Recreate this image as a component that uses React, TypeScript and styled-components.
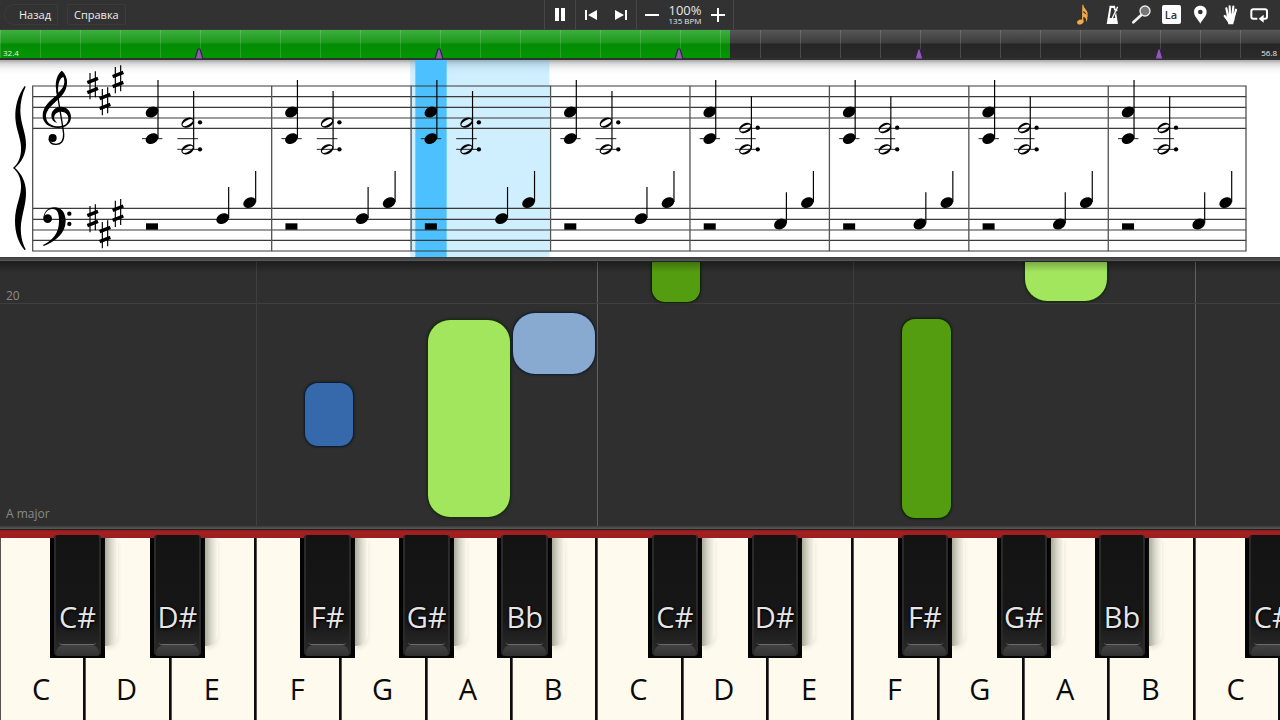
import React from 'react';
import styled, { createGlobalStyle } from 'styled-components';

const GlobalStyle = createGlobalStyle`
  *, *::before, *::after { box-sizing: border-box; }
  body {
    margin: 0;
    background: #2f2f2f;
    font-family: "Open Sans", "Noto Sans", sans-serif;
  }
  button { font-family: inherit; }
`;

const Page = styled.div`
  display: flex;
  flex-direction: column;
  min-height: 100vh;
  overflow: hidden;
`;

/* ---------- top bar ---------- */

const TopBar = styled.header`
  display: grid;
  grid-template-columns: 1fr auto 1fr;
  align-items: stretch;
  height: 29px;
  padding: 0 6px 0 4px;
  background: #323232;
`;

const NavGroup = styled.nav`
  display: flex;
  align-items: center;
  gap: 9px;
`;

const NavButton = styled.button<{ $back?: boolean }>`
  height: 21px;
  padding: ${(p) => (p.$back ? '0 6px 0 14px' : '0 6px')};
  border: 1px solid #3b3b3b;
  border-radius: ${(p) => (p.$back ? '10px 1px 1px 10px' : '1px')};
  background: transparent;
  color: #ececec;
  font-size: 11px;
  line-height: 18px;
`;

const Transport = styled.div`
  display: flex;
`;

const ControlGroup = styled.div`
  display: flex;
  align-items: center;
  border-left: 1px solid #474747;
  &:last-child { border-right: 1px solid #474747; }
`;

const IconButton = styled.button`
  display: flex;
  align-items: center;
  justify-content: center;
  width: 30px;
  height: 29px;
  padding: 0;
  border: 0;
  background: transparent;
  color: #fff;
`;

const ToolButton = styled(IconButton)`
  width: 29px;
`;

const Tempo = styled.div`
  display: flex;
  flex-direction: column;
  align-items: center;
  width: 36px;
  color: #e6e6e6;
  white-space: nowrap;
`;

const TempoPercent = styled.span`
  font-size: 13px;
  line-height: 13px;
`;

const TempoBpm = styled.span`
  font-size: 8px;
  line-height: 8px;
`;

const Tools = styled.div`
  display: flex;
  justify-content: space-between;
  justify-self: end;
  width: 206px;
`;

const NameBadge = styled.span`
  width: 19px;
  height: 19px;
  border-radius: 2px;
  background: #fff;
  color: #333;
  font-size: 11px;
  font-weight: 600;
  line-height: 20px;
`;

/* ---------- timeline ---------- */

const Timeline = styled.div`
  position: relative;
  height: 31px;
  border-top: 1px solid #3a3a3a;
  border-bottom: 2px solid #303030;
  background: linear-gradient(#575757, #3c3c3c 46%, #262626 50%, #2b2b2b);
`;

const Played = styled.div`
  height: 100%;
  background: linear-gradient(#3fae3f, #1a9a1a 46%, #048c04 50%, #029602);
`;

const Ticks = styled.div`
  position: absolute;
  inset: 0;
  background-image: linear-gradient(to right, rgba(255, 255, 255, 0.15) 1px, transparent 1px);
  background-size: 3.125% 100%;
`;

const TimeLabel = styled.span<{ $side: 'left' | 'right' }>`
  position: absolute;
  bottom: 0;
  ${(p) => p.$side}: 3px;
  color: #e4f0e4;
  font-size: 8px;
  line-height: 10px;
`;

const Marker = styled.svg`
  position: absolute;
  bottom: -1px;
  width: 10px;
  height: 11px;
  margin-left: -5px;
`;

/* ---------- score ---------- */

const ScorePanel = styled.section`
  background: linear-gradient(#a9a9a9, #dcdcdc 4px, #f6f6f6 9px, #fff 14px);
`;

const ScoreSheet = styled.svg`
  display: block;
  width: 100%;
  height: auto;
  color: #000;
`;

const Divider = styled.div<{ $size: number }>`
  flex: none;
  height: ${(p) => p.$size}px;
  border-bottom: 1px solid #222;
  background: linear-gradient(#3c3c3c, #585858);
`;

/* ---------- falling notes ---------- */

const Roll = styled.main`
  position: relative;
  flex: 1;
  min-height: 264px;
  overflow: hidden;
  background: linear-gradient(#282828, #2f2f2f 12px);
`;

const RollShade = styled.div`
  position: absolute;
  inset: 0 0 auto;
  height: 10px;
  background: linear-gradient(rgba(0, 0, 0, 0.25), transparent);
`;

const OctaveLine = styled.div<{ $strong: boolean }>`
  position: absolute;
  top: 0;
  bottom: 0;
  width: 1px;
  background: ${(p) => (p.$strong ? '#616161' : '#3f3f3f')};
`;

const BarLine = styled.div`
  position: absolute;
  left: 0;
  right: 0;
  bottom: 222px;
  height: 1px;
  background: #3f3f3f;
`;

const RollLabel = styled.span<{ $bottom: number }>`
  position: absolute;
  left: 6px;
  bottom: ${(p) => p.$bottom}px;
  color: #8a8a8a;
  font-size: 12px;
  line-height: 16px;
`;

const tones = {
  green: { fill: '#a2e65e', edge: '#16300a', radius: 22 },
  darkGreen: { fill: '#549c10', edge: '#102405', radius: 13 },
  blue: { fill: '#3669ab', edge: '#0e1d33', radius: 13 },
  lightBlue: { fill: '#88a9d0', edge: '#122238', radius: 22 },
};

const FallingNote = styled.div<{ $tone: keyof typeof tones }>`
  position: absolute;
  border-radius: ${(p) => tones[p.$tone].radius}px;
  background: ${(p) => tones[p.$tone].fill};
  box-shadow: 0 0 1px 1px ${(p) => tones[p.$tone].edge}, 0 0 3px 1px rgba(0, 0, 0, 0.4);
`;

/* ---------- keyboard ---------- */

const Felt = styled.div`
  flex: none;
  height: 8px;
  background: linear-gradient(#8c1a1a, #a32020 2px, #9a1f1f);
`;

const Keyboard = styled.section`
  position: relative;
  display: flex;
  flex: none;
  height: 182px;
`;

const WhiteKey = styled.button`
  display: flex;
  flex: 1 1 0;
  align-items: flex-end;
  justify-content: center;
  min-width: 0;
  padding: 0 2px 11px 0;
  border: 0;
  border-left: 1px solid #55544e;
  border-right: 2px solid #0c0c0c;
  background: #fefbee;
  color: #0a0a0a;
  font-size: 29px;
  line-height: 40px;
`;

const BlackKey = styled.button`
  position: absolute;
  top: 0;
  width: 4.25%;
  height: 120px;
  padding: 0 4px 2px;
  border: 0;
  background: #030303;
  color: #e6e6e6;
  &::after {
    content: "";
    position: absolute;
    top: 0;
    bottom: 12px;
    left: 100%;
    width: 13px;
    border-radius: 0 0 12px 0;
    background: linear-gradient(to right, rgba(115, 118, 102, 0.6), rgba(140, 142, 125, 0.3) 50%, transparent);
    box-shadow: 0 3px 4px rgba(140, 142, 125, 0.2);
  }
`;

const KeyFace = styled.span`
  position: relative;
  display: flex;
  align-items: flex-end;
  justify-content: center;
  height: 121px;
  margin-top: -3px;
  padding-bottom: 19px;
  border: solid #2a2a2a;
  border-width: 0 2px;
  border-radius: 3px 3px 4px 4px;
  background: linear-gradient(#131313, #171717 70%, #262626 90%);
  font-size: 29px;
  line-height: 40px;
  text-shadow: 0 1px 3px #000, 1px 0 2px #000;
  white-space: nowrap;
  &::before {
    content: "";
    position: absolute;
    inset: auto 3px 11px;
    height: 3px;
    border-bottom: 1px solid #6a6a6a;
    border-radius: 0 0 4px 4px;
  }
  &::after {
    content: "";
    position: absolute;
    inset: auto 0 0;
    height: 11px;
    border-radius: 8px 8px 3px 3px;
    background: linear-gradient(#434343, #313131);
  }
`;

/* ---------- score drawing ---------- */

const MEASURE = 418.3;

function Sharp({ x, y }: { x: number; y: number }) {
  return (
    <g transform={`translate(${x} ${y})`} stroke="currentColor" fill="none">
      <path d="M-8 -37V42M8 -42V36" strokeWidth="3.5" />
      <path d="M-16 -8L16 -21M-16 22L16 9" strokeWidth="10" />
    </g>
  );
}

function Head({ x, y }: { x: number; y: number }) {
  return <ellipse cx={x} cy={y} rx="20" ry="15" transform={`rotate(-28 ${x} ${y})`} />;
}

function OpenHead({ x, y }: { x: number; y: number }) {
  return (
    <g transform={`rotate(-28 ${x} ${y})`}>
      <path
        fillRule="evenodd"
        d={`M${x - 20} ${y}a20 14 0 1 0 40 0a20 14 0 1 0 -40 0ZM${x - 17} ${y + 1}a17 7 0 1 0 34 -2a17 7 0 1 0 -34 2Z`}
      />
    </g>
  );
}

function Measure({ index }: { index: number }) {
  const drop = index >= 4 ? 16 : 0;
  return (
    <g transform={`translate(${index * MEASURE} 0)`} fill="currentColor">
      <path
        d={`M426 248H487M532 248H594M532 280H594`}
        stroke="#222"
        strokeWidth="3"
      />
      <path
        d={`M474 72V246M581 ${105 + drop}V278M686 ${393 + drop}V${486 + drop}M767 345V438`}
        stroke="currentColor"
        strokeWidth="3.5"
      />
      <Head x={456} y={168} />
      <Head x={456} y={248} />
      <OpenHead x={563} y={200 + drop} />
      <OpenHead x={563} y={280} />
      <circle cx="600" cy={199 + drop} r="6.5" />
      <circle cx="600" cy="280" r="6.5" />
      <rect x="438" y="502" width="36" height="19" />
      <Head x={668} y={488 + drop} />
      <Head x={749} y={440} />
    </g>
  );
}

function Score() {
  const lines = [90, 122, 154, 186, 217, 457, 490, 522, 553, 585];
  const bars = [98, ...Array.from({ length: 8 }, (_, i) => 815 + i * MEASURE)];
  bars[8] = 3738;
  return (
    <ScoreSheet viewBox="0 12 3840 591" role="img" aria-label="A major">
      <rect x="1231" y="12" width="417" height="591" fill="#4dbffa" opacity="0.27" />
      <rect x="1246" y="12" width="94" height="591" fill="#4dc1ff" />
      {lines.map((y) => (
        <path key={y} d={`M97 ${y}H3739`} stroke="#3a3a3a" strokeWidth="3.5" />
      ))}
      {bars.map((x) => (
        <path key={x} d={`M${x} 89V586`} stroke="#555" strokeWidth="4" />
      ))}
      <g fill="currentColor">
        <path d="M74 90C54 118 45 150 46 185C48 225 66 250 63 285C61 310 52 325 39 336C52 346 62 362 63 388C65 420 45 450 45 495C45 530 55 560 74 583L77 580C64 555 61 530 63 505C67 470 78 445 78 410C78 375 63 352 45 336C63 320 78 298 78 265C78 230 62 205 61 165C61 140 66 115 77 92Z" />
        <path
          fillRule="evenodd"
          d="M185 44C172 54 165 76 168 98C169 106 170 112 171 117C149 135 128 152 128 180C128 201 147 216 174 216C198 216 213 202 213 183C213 166 200 152 184 152C166 152 154 164 154 179C154 190 160 198 172 201C164 194 161 188 163 181C165 172 174 167 183 167C197 167 205 176 205 187C205 202 194 211 177 211C153 211 138 200 138 180C139 161 158 146 175 130C191 115 201 100 201 78C201 64 194 50 185 44ZM190 63C180 65 172 84 175 110C187 99 196 86 196 73C196 67 194 63 190 63Z"
        />
        <path d="M171 104C176 145 190 216 191 235C192 256 182 265 168 265C158 265 148 260 147 248" fill="none" stroke="currentColor" strokeWidth="4" />
        <path d="M190 58C199 66 199 88 186 106C174 122 152 134 140 154C134 164 132 174 133 184" fill="none" stroke="currentColor" strokeWidth="6" />
        <circle cx="158" cy="246" r="12" />
        <circle cx="143" cy="488" r="13" />
        <path d="M130 489C130 468 144 454 163 454C185 454 197 471 197 495C197 532 165 557 131 570L129 567C160 552 177 530 177 494C177 472 172 459 158 459C147 459 138 465 134 478Z" />
        <circle cx="208" cy="473" r="6.5" />
        <circle cx="208" cy="504" r="6.5" />
      </g>
      <Sharp x={278} y={88} />
      <Sharp x={315} y={136} />
      <Sharp x={354} y={70} />
      <Sharp x={278} y={487} />
      <Sharp x={315} y={535} />
      <Sharp x={354} y={471} />
      {Array.from({ length: 8 }, (_, i) => (
        <Measure key={i} index={i} />
      ))}
    </ScoreSheet>
  );
}

/* ---------- toolbar icons ---------- */

function ToolIcon({ cx, children }: { cx: number; children: React.ReactNode }) {
  return (
    <svg width="29" height="29" viewBox={`${cx - 43} 0 87 87`} fill="#fff" aria-hidden="true">
      {children}
    </svg>
  );
}

const tools: { name: string; icon: React.ReactNode }[] = [
  {
    name: 'Notes',
    icon: (
      <ToolIcon cx={66}>
        <g fill="#f3ab45">
          <ellipse cx="60" cy="66" rx="10" ry="7" transform="rotate(-20 60 66)" />
          <path d="M66 14H69C70 26 84 31 82 45C82 48 82 50 81 52C82 58 80 62 77 66C79 57 76 52 69 50V66H65ZM69 33V38C74 40 78 43 79 47C79 41 74 36 69 33Z" fillRule="evenodd" />
        </g>
      </ToolIcon>
    ),
  },
  {
    name: 'Metronome',
    icon: (
      <ToolIcon cx={155}>
        <path d="M147 17H163L172 72H138Z" />
        <path d="M152 24H159L164 54H147Z" fill="#323232" />
        <path d="M154 54L171 21" stroke="#323232" strokeWidth="8" />
        <path d="M154 56L171 20" stroke="#fff" strokeWidth="4" />
        <path d="M163 28L170 32" stroke="#fff" strokeWidth="5" />
      </ToolIcon>
    ),
  },
  {
    name: 'Zoom',
    icon: (
      <ToolIcon cx={245}>
        <path d="M221 67L245 45" stroke="#f2f2f2" strokeWidth="8" strokeLinecap="round" />
        <circle cx="256" cy="33" r="15" fill="#767676" stroke="#ededed" strokeWidth="4" />
      </ToolIcon>
    ),
  },
  { name: 'Note names', icon: <NameBadge>La</NameBadge> },
  {
    name: 'Bookmark',
    icon: (
      <ToolIcon cx={420}>
        <path fillRule="evenodd" d="M420 17C409 17 401 25 401 36C401 49 415 60 420 71C425 60 439 49 439 36C439 25 431 17 420 17ZM420 29A7 7 0 1 1 420 43A7 7 0 1 1 420 29Z" />
      </ToolIcon>
    ),
  },
  {
    name: 'Hands',
    icon: (
      <ToolIcon cx={508}>
        <path d="M501 48L496 25M507 46L506 19M514 46L517 20M519 50L525 29M503 63L491 48" stroke="#fff" strokeWidth="6.5" strokeLinecap="round" />
        <path d="M498 41L522 41L521 58C520 64 517 67 517 73H502C502 67 499 64 495 57Z" />
      </ToolIcon>
    ),
  },
  {
    name: 'Loop',
    icon: (
      <ToolIcon cx={597}>
        <path d="M591 56H579Q573 56 573 50V34Q573 28 579 28H614Q620 28 620 34V50Q620 56 614 56H606" fill="none" stroke="#fff" strokeWidth="6" />
        <path d="M595 56L610 44V68Z" />
      </ToolIcon>
    ),
  },
];

/* ---------- data ---------- */

const KEYS = 15;
const whiteNames = ['C', 'D', 'E', 'F', 'G', 'A', 'B'];
const blackKeys = [
  { name: 'C#', at: 0.59 },
  { name: 'D#', at: 1.76 },
  { name: 'F#', at: 3.52 },
  { name: 'G#', at: 4.68 },
  { name: 'Bb', at: 5.83 },
];
const percent = (keys: number) => `${(keys / KEYS) * 100}%`;

const notes: { tone: keyof typeof tones; at: number; wide: number; bottom: number; height: number }[] = [
  { tone: 'blue', at: 3.57, wide: 0.57, bottom: 80, height: 63 },
  { tone: 'green', at: 5.01, wide: 0.965, bottom: 9, height: 197 },
  { tone: 'lightBlue', at: 6.01, wide: 0.965, bottom: 152, height: 61 },
  { tone: 'darkGreen', at: 7.635, wide: 0.57, bottom: 224, height: 80 },
  { tone: 'darkGreen', at: 10.57, wide: 0.57, bottom: 8, height: 199 },
  { tone: 'green', at: 12.01, wide: 0.965, bottom: 225, height: 80 },
];

export default function App() {
  const blacks = [0, 1, 2].flatMap((octave) =>
    blackKeys.map((key) => ({ name: key.name, at: key.at + octave * 7 })),
  ).filter((key) => key.at < KEYS);

  return (
    <Page>
      <GlobalStyle />
      <TopBar>
        <NavGroup>
          <NavButton $back>Назад</NavButton>
          <NavButton>Справка</NavButton>
        </NavGroup>
        <Transport>
          <ControlGroup>
            <IconButton aria-label="Pause">
              <svg width="12" height="13" fill="#fff"><path d="M1 0H5V13H1ZM7 0H11V13H7Z" /></svg>
            </IconButton>
          </ControlGroup>
          <ControlGroup>
            <IconButton aria-label="Previous">
              <svg width="12" height="10" fill="#fff"><path d="M0 0H2V10H0ZM12 0V10L3 5Z" /></svg>
            </IconButton>
            <IconButton aria-label="Next">
              <svg width="12" height="10" fill="#fff"><path d="M12 0H10V10H12ZM0 0V10L9 5Z" /></svg>
            </IconButton>
          </ControlGroup>
          <ControlGroup>
            <IconButton aria-label="Slower">
              <svg width="14" height="14" fill="#fff"><path d="M0 6H14V8H0Z" /></svg>
            </IconButton>
            <Tempo>
              <TempoPercent>100%</TempoPercent>
              <TempoBpm>135 BPM</TempoBpm>
            </Tempo>
            <IconButton aria-label="Faster">
              <svg width="14" height="14" fill="#fff"><path d="M0 6H6V0H8V6H14V8H8V14H6V8H0Z" /></svg>
            </IconButton>
          </ControlGroup>
        </Transport>
        <Tools>
          {tools.map((tool) => (
            <ToolButton key={tool.name} aria-label={tool.name}>{tool.icon}</ToolButton>
          ))}
        </Tools>
      </TopBar>

      <Timeline>
        <Played style={{ width: '57%' }} />
        <Ticks />
        {[0, 1, 2, 3, 4].map((i) => (
          <Marker key={i} viewBox="0 0 10 11" style={{ left: `${15.55 + i * 18.75}%` }}>
            <path d="M1 11L4 1H6L9 11Z" fill="#8f5bb0" stroke="#35204a" strokeWidth="1.2" />
          </Marker>
        ))}
        <TimeLabel $side="left">32.4</TimeLabel>
        <TimeLabel $side="right">56.8</TimeLabel>
      </Timeline>

      <ScorePanel>
        <Score />
      </ScorePanel>
      <Divider $size={5} />

      <Roll>
        {[3, 7, 10, 14].map((k) => (
          <OctaveLine key={k} $strong={k % 7 === 0} style={{ left: percent(k) }} />
        ))}
        <BarLine />
        <RollLabel $bottom={222}>20</RollLabel>
        <RollLabel $bottom={4}>A major</RollLabel>
        {notes.map((n) => (
          <FallingNote
            key={`${n.at}-${n.bottom}`}
            $tone={n.tone}
            style={{ left: percent(n.at), width: percent(n.wide), bottom: n.bottom, height: n.height }}
          />
        ))}
        <RollShade />
      </Roll>
      <Divider $size={4} />

      <Felt />
      <Keyboard aria-label="Piano">
        {Array.from({ length: KEYS }, (_, i) => (
          <WhiteKey key={i}>{whiteNames[i % 7]}</WhiteKey>
        ))}
        {blacks.map((key) => (
          <BlackKey key={key.at} style={{ left: percent(key.at) }}>
            <KeyFace>{key.name}</KeyFace>
          </BlackKey>
        ))}
      </Keyboard>
    </Page>
  );
}
